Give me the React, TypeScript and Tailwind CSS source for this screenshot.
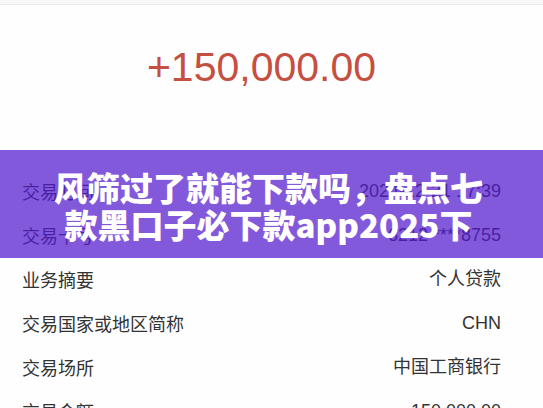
const rows = [
  { label: "交易时间", value: "2024-12-21 17:39" },
  { label: "交易卡号", value: "6212 ****8755" },
  { label: "业务摘要", value: "个人贷款" },
  { label: "交易国家或地区简称", value: "CHN" },
  { label: "交易场所", value: "中国工商银行" },
  { label: "交易金额", value: "150,000.00" },
];

export default function App() {
  return (
    <div className="relative h-[408px] w-[543px] overflow-hidden bg-[#fefefe] font-['Liberation_Sans','Noto_Sans_CJK_SC',sans-serif]">
      <div className="h-1 bg-[#f7f7f7]" />
      <div className="border-t border-[#ececec]" />

      <div className="flex h-[164px] items-start justify-center pr-[20px] pt-[34px]">
        <span className="text-[41px] leading-[56px] text-[#c54f40]">+150,000.00</span>
      </div>

      <div className="flex flex-col">
        {rows.map((r) => (
          <div
            key={r.label}
            className="flex h-[44px] items-center justify-between pl-[22px] pr-[42px] text-[18px] text-[#333]"
          >
            <span className="font-['Noto_Sans_CJK_SC',sans-serif]">{r.label}</span>
            <span>{r.value}</span>
          </div>
        ))}
      </div>

      <div className="absolute left-0 right-0 top-[150px] flex h-[108px] flex-col items-center justify-center bg-[#5319cf]/[0.72] pt-[3px] pr-[6px] font-['Noto_Sans_CJK_SC',sans-serif] text-[33px] font-black leading-[37px] text-white">
        <span>风筛过了就能下款吗，盘点七</span>
        <span>款黑口子必下款app2025下</span>
      </div>
    </div>
  );
}
